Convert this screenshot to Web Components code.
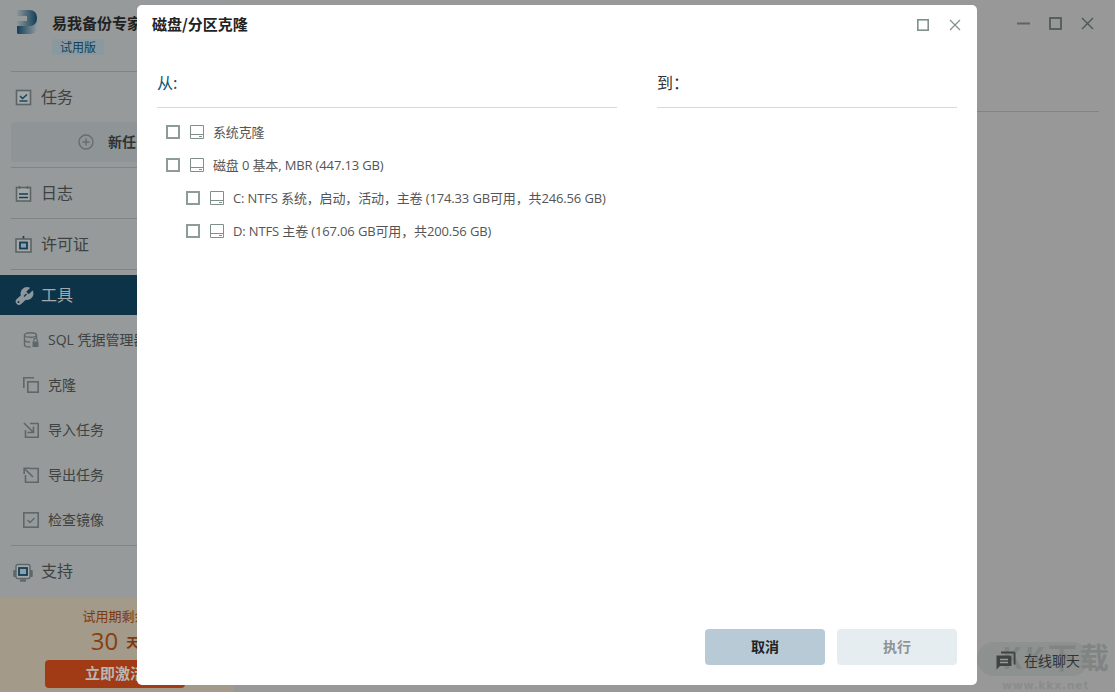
<!DOCTYPE html>
<html lang="zh">
<head>
<meta charset="utf-8">
<title>易我备份专家</title>
<style>
  html, body { margin: 0; height: 100%; }
  body { font-family: "Open Sans", "Noto Sans CJK SC", sans-serif; overflow: hidden; }
</style>
</head>
<body>

<app-window>
  <side-bar slot="side">
    <nav-item icon="task">任务</nav-item>
    <new-task>新任务</new-task>
    <side-rule></side-rule>
    <nav-item icon="log">日志</nav-item>
    <side-rule></side-rule>
    <nav-item icon="license">许可证</nav-item>
    <side-rule></side-rule>
    <nav-item icon="tools" active>工具</nav-item>
    <nav-item sub icon="sql">SQL 凭据管理器</nav-item>
    <nav-item sub icon="clone">克隆</nav-item>
    <nav-item sub icon="import">导入任务</nav-item>
    <nav-item sub icon="export">导出任务</nav-item>
    <nav-item sub icon="check">检查镜像</nav-item>
    <side-rule gap></side-rule>
    <nav-item icon="support">支持</nav-item>
  </side-bar>
  <clone-dialog slot="dialog">
    <disk-row>系统克隆</disk-row>
    <disk-row>磁盘 0 基本, MBR (447.13 GB)</disk-row>
    <disk-row child>C: NTFS 系统，启动，活动，主卷 (174.33 GB可用，共246.56 GB)</disk-row>
    <disk-row child>D: NTFS 主卷 (167.06 GB可用，共200.56 GB)</disk-row>
  </clone-dialog>
</app-window>

<script>
const ICONS = {
  task: `<rect x="1.5" y="1.5" width="14" height="14" stroke="#5c6464" stroke-width="1.6" fill="#a3a7a7"/><path d="M5 7l2.5 2.5L12 5.5" stroke="#123f58" stroke-width="1.4" fill="none"/><path d="M4.5 12h8" stroke="#123f58" stroke-width="1.4"/>`,
  log: `<rect x="1.5" y="2.5" width="14" height="13.5" stroke="#5c6464" stroke-width="1.6" fill="#a3a7a7"/><path d="M4.5 1v3M12.5 1v3" stroke="#5c6464" stroke-width="1.4"/><path d="M4 9h9M4 12.5h9" stroke="#123f58" stroke-width="1.4"/>`,
  license: `<path d="M8.500 0v3" stroke="#123f58" stroke-width="1.6"/><rect x="1" y="3" width="15" height="13" stroke="#5c6464" stroke-width="1.6" fill="#a3a7a7"/><rect x="5" y="6.500" width="7" height="6" stroke="#123f58" stroke-width="1.8" fill="#8d9fa8"/>`,
  tools: `<circle cx="12" cy="6.500" r="6.500" fill="#8e979c"/><path d="M10 9L4 14.500" stroke="#8e979c" stroke-width="6.500" stroke-linecap="round"/><path d="M12.500 6L18 .5" stroke="#0d3348" stroke-width="3.600"/><path d="M9 9.500l2.500-2.500" stroke="#0d3348" stroke-width="1.300"/><circle cx="3.500" cy="15" r="1" fill="#0d3348"/>`,
  sql: `<ellipse cx="7.500" cy="3" rx="6" ry="2.200" fill="none" stroke="#5f6868" stroke-width="1.400"/><path d="M1.500 3v10c0 1.200 2.400 2 6 2M13.500 3v3M1.500 8c0 1.200 2.400 2 5.500 2" fill="none" stroke="#5f6868" stroke-width="1.400"/><rect x="9.500" y="9.500" width="6" height="5.500" fill="#5f6868"/><path d="M10.800 9.500V8a1.700 1.700 0 0 1 3.400 0v1.500" fill="none" stroke="#5f6868" stroke-width="1.200"/>`,
  clone: `<path d="M.8 11V.8H11" fill="none" stroke="#5f6868" stroke-width="1.600"/><rect x="4.800" y="4.800" width="10.400" height="10.400" fill="none" stroke="#5f6868" stroke-width="1.600"/>`,
  import: `<path d="M7 1.500h8.200v13.700H2.500V8" fill="none" stroke="#5f6868" stroke-width="1.600"/><path d="M1 1l9 9M10.500 4.500v6h-6" fill="none" stroke="#5f6868" stroke-width="1.600"/>`,
  export: `<path d="M7 1.500h8.200v13.700H2.500V8" fill="none" stroke="#5f6868" stroke-width="1.600"/><path d="M10 10L1.500 1.500M1.200 7V1.200H7" fill="none" stroke="#5f6868" stroke-width="1.600"/>`,
  check: `<rect x=".8" y=".8" width="14.400" height="14.400" fill="none" stroke="#5f6868" stroke-width="1.600"/><path d="M4.500 8l2.500 2.500 4.500-4.500" fill="none" stroke="#5f6868" stroke-width="1.400"/>`,
  support: `<g transform="translate(-2 0)"><path d="M.8 7.500h2v6h-2zM17.200 7.500h2v6h-2z" fill="#5f6868" stroke="#5f6868"/><rect x="3" y="1.500" width="14" height="14" rx="2" fill="#a3a7a7" stroke="#5f6868" stroke-width="1.400"/><rect x="6" y="5" width="8" height="7" stroke="#123f58" stroke-width="1.800" fill="#8d9fa8"/><path d="M7 17.500h6" stroke="#5f6868" stroke-width="2.400"/></g>`
};

class AppWindow extends HTMLElement {
  constructor() {
    super();
    this.attachShadow({ mode: "open" }).innerHTML = `
      <style>
        :host { display: flex; position: relative; width: 1115px; height: 692px; overflow: hidden; background: #989898; }
        .main { flex: 1; position: relative; min-width: 0; padding: 16px 16px 0; box-sizing: border-box; }
        .controls { display: flex; justify-content: flex-end; align-items: center; gap: 17px; height: 15px; padding-right: 4px; }
        .controls svg { display: block; width: 15px; height: 15px; }
        .rule { margin: 80px 0 0 0; border-top: 1px solid #828484; }
        .chat { position: absolute; right: 35px; bottom: 22px; display: flex; align-items: center; gap: 8px; color: #303434; font-size: 14px; z-index: 1; }
        .chat svg { width: 20px; height: 20px; display: block; }
        .mark { position: absolute; left: 743px; top: 642px; width: 138px; height: 50px; }
        .pill { position: absolute; left: 0; top: 0; width: 112px; height: 34px; border-radius: 17px; background: #8d9190; }
        .brush { position: absolute; left: 25px; top: -6px; font: 700 29px/40px "Noto Sans CJK SC", sans-serif; letter-spacing: 3px; color: #808583; white-space: nowrap; }
        .site { position: absolute; left: 25px; top: 38px; font: 700 11px/12px "DejaVu Sans", sans-serif; letter-spacing: .6px; color: #8a8c8c; white-space: nowrap; }
        .dialog { position: absolute; left: 137px; top: 5px; width: 840px; height: 680px; z-index: 2; }
      </style>
      <slot name="side"></slot>
      <div class="main">
        <div class="controls">
          <svg viewBox="0 0 15 15"><path d="M1 7.500h13" stroke="#5c6464" stroke-width="2"/></svg>
          <svg viewBox="0 0 15 15"><rect x="2" y="2" width="11" height="11" fill="none" stroke="#4f5656" stroke-width="1.700"/></svg>
          <svg viewBox="0 0 15 15"><path d="M2 2l11 11M13 2L2 13" stroke="#4f5656" stroke-width="1.400"/></svg>
        </div>
        <div class="rule"></div>
        <div class="mark"><div class="pill"></div><div class="brush">KK下载</div><div class="site">www.kkx.net</div></div>
        <div class="chat">
          <svg viewBox="0 0 20 20"><path d="M5 3.500V1.500h12.500a2 2 0 0 1 2 2v11h-1.800V3.500z" fill="#3e4444"/><path d="M.5 5.500h13a2 2 0 0 1 2 2V16H4l-3.500 3.500z" fill="#3e4444"/><path d="M4 9.500h8M4 12.500h8" stroke="#989898" stroke-width="1.400"/></svg>
          <span>在线聊天</span>
        </div>
      </div>
      <div class="dialog"><slot name="dialog"></slot></div>
    `;
  }
}

class SideBar extends HTMLElement {
  constructor() {
    super();
    this.attachShadow({ mode: "open" }).innerHTML = `
      <style>
        :host { display: flex; flex-direction: column; width: 234px; height: 692px; flex: none; background: #969a9a; color: #3a3e3e; }
        .brand { display: flex; height: 72px; flex: none; box-sizing: border-box; padding: 10px 0 0 17px; gap: 15px; }
        .brand svg { width: 20px; height: 24px; flex: none; }
        .name { font: 700 15px/25px "Noto Sans CJK SC", sans-serif; color: #1f2222; white-space: nowrap; }
        .tag { width: 52px; height: 16px; background: #8a999f; border-radius: 2px; margin-top: 4px; font: 12px/15px "Noto Sans CJK SC", sans-serif; color: #123f58; text-align: center; }
        .line { height: 1px; background: #7f8484; margin: -1px 0 0 11px; flex: none; }
        .rows { flex: 1; display: flex; flex-direction: column; min-height: 0; }
        .promo { height: 94px; flex: none; box-sizing: border-box; background: #a39a89; padding-top: 9px; color: #7c3a0e; font: 13px/17px "Noto Sans CJK SC", sans-serif; }
        .promo > div { width: 230px; text-align: center; }
        .days { display: flex; justify-content: center; align-items: center; gap: 8px; height: 26px; margin-top: 4px; font-weight: 700; }
        .days b { font: 400 24px/26px "Open Sans", sans-serif; color: #86400f; }
        .promo .btn { width: 140px; height: 28px; margin: 6px 0 0 45px; background: #a03b16; border-radius: 4px; color: #b7b7b4; font: 700 15px/25px "Noto Sans CJK SC", sans-serif; }
      </style>
      <div class="brand">
        <svg viewBox="0 0 20 24">
          <defs>
            <linearGradient id="a" x1="0" x2="1"><stop offset="0" stop-color="#8b969b"/><stop offset="1" stop-color="#123f58"/></linearGradient>
            <linearGradient id="b" x1="0" x2="1"><stop offset="0" stop-color="#123f58"/><stop offset="1" stop-color="#8f9a9f"/></linearGradient>
          </defs>
          <path d="M0 11h20v7a6 6 0 0 1-6 6H1.500A1.500 1.500 0 0 1 0 22.500z" fill="url(#b)"/>
          <path d="M0 0h13a7 7 0 0 1 7 7v2a7 7 0 0 1-7 7H0V11h10V6H0z" fill="url(#a)"/>
        </svg>
        <div>
          <div class="name">易我备份专家</div>
          <div class="tag">试用版</div>
        </div>
      </div>
      <div class="line"></div>
      <div class="rows"><slot></slot></div>
      <div class="promo">
        <div>试用期剩余</div>
        <div class="days"><b>30</b><span>天</span></div>
        <div class="btn">立即激活</div>
      </div>
    `;
  }
}

class NavItem extends HTMLElement {
  constructor() {
    super();
    const icon = ICONS[this.getAttribute("icon")] || "";
    this.attachShadow({ mode: "open" }).innerHTML = `
      <style>
        :host { display: flex; align-items: center; height: 50px; flex: none; box-sizing: border-box; padding-left: 15px; gap: 9px; font: 16px "Noto Sans CJK SC", sans-serif; color: #3e4242; white-space: nowrap; overflow: hidden; }
        :host([active]) { background: #0d3348; color: #a6a9aa; height: 40px; margin: 5px 0 3px; }
        :host([sub]) { height: 45px; padding-left: 23px; gap: 8px; font-size: 14px; font-family: "Open Sans", "Noto Sans CJK SC", sans-serif; }
        svg { width: 17px; height: 17px; flex: none; overflow: visible; }
        span { padding-bottom: 3px; }
      </style>
      <svg viewBox="0 0 17 17">${icon}</svg>
      <span><slot></slot></span>
    `;
  }
}

class NewTask extends HTMLElement {
  constructor() {
    super();
    this.attachShadow({ mode: "open" }).innerHTML = `
      <style>
        :host { display: flex; align-items: center; height: 40px; flex: none; margin: 0 0 5px 11px; padding-left: 67px; gap: 14px; border-radius: 3px; background: #8f9597; font: 700 14px "Noto Sans CJK SC", sans-serif; color: #303434; white-space: nowrap; }
        svg { width: 16px; height: 16px; flex: none; }
        span { padding-bottom: 2px; }
      </style>
      <svg viewBox="0 0 16 16"><circle cx="8" cy="8" r="7" fill="none" stroke="#676e6e" stroke-width="1.400"/><path d="M8 4.500v7M4.500 8h7" stroke="#676e6e" stroke-width="1.400"/></svg>
      <span><slot></slot></span>
    `;
  }
}

class SideRule extends HTMLElement {
  constructor() {
    super();
    this.attachShadow({ mode: "open" }).innerHTML = `
      <style>
        :host { display: block; height: 1px; background: #7f8484; margin-left: 11px; flex: none; }
        :host([gap]) { margin-top: 2px; }
      </style>
    `;
  }
}

class CloneDialog extends HTMLElement {
  constructor() {
    super();
    this.attachShadow({ mode: "open" }).innerHTML = `
      <style>
        :host { display: flex; flex-direction: column; width: 840px; height: 680px; box-sizing: border-box; background: #fff; border-radius: 5px; color: #222; }
        header { display: flex; align-items: center; height: 40px; padding: 0 15px; flex: none; }
        h1 { flex: 1; margin: 0; padding-bottom: 3px; font: 700 15px "Noto Sans CJK SC", sans-serif; color: #222; }
        .ctl { display: flex; gap: 18px; align-items: center; }
        .ctl svg { display: block; width: 14px; height: 14px; }
        .cols { flex: 1; display: flex; gap: 40px; padding: 0 20px; margin-top: 17px; min-height: 0; }
        .col { display: flex; flex-direction: column; }
        .from { width: 460px; }
        .to { width: 300px; }
        .head { height: 46px; box-sizing: border-box; border-bottom: 1px solid #d9d9d9; font: 16px/40px "Noto Sans CJK SC", sans-serif; }
        .from .head { color: #0f5576; }
        .to .head { color: #333; }
        .list { padding: 7px 0 0 9px; }
        footer { display: flex; justify-content: flex-end; gap: 12px; padding: 0 20px 20px; flex: none; }
        button { width: 120px; height: 36px; border: 0; border-radius: 4px; font: 700 14px "Noto Sans CJK SC", sans-serif; padding: 0 0 2px; }
        .cancel { background: #b8cad5; color: #222; }
        .run { background: #e6edf1; color: #8f9395; }
      </style>
      <header>
        <h1>磁盘/分区克隆</h1>
        <div class="ctl">
          <svg viewBox="0 0 14 14"><rect x="1.800" y="1.800" width="10.400" height="10.400" fill="none" stroke="#7f908c" stroke-width="1.600"/></svg>
          <svg viewBox="0 0 14 14"><path d="M2 2l10 10M12 2L2 12" stroke="#7f908c" stroke-width="1.200"/></svg>
        </div>
      </header>
      <div class="cols">
        <div class="col from">
          <div class="head">从:</div>
          <div class="list"><slot></slot></div>
        </div>
        <div class="col to">
          <div class="head">到：</div>
        </div>
      </div>
      <footer>
        <button class="cancel">取消</button>
        <button class="run">执行</button>
      </footer>
    `;
  }
}

class DiskRow extends HTMLElement {
  constructor() {
    super();
    this.attachShadow({ mode: "open" }).innerHTML = `
      <style>
        :host { display: flex; align-items: center; height: 33px; font: 13px "Open Sans", "Noto Sans CJK SC", sans-serif; letter-spacing: -.14px; color: #555; white-space: nowrap; }
        :host([child]) { padding-left: 20px; }
        .box { width: 14px; height: 14px; box-sizing: border-box; border: 2px solid #8d9c98; flex: none; margin-right: 10px; }
        svg { width: 14px; height: 14px; flex: none; margin-right: 9px; }
      </style>
      <span class="box"></span>
      <svg viewBox="0 0 14 14"><path d="M.5.500h13v13H.5zM.5 9.500h13" fill="none" stroke="#7f908c"/><path d="M9 11.500h3" stroke="#7f908c"/></svg>
      <span><slot></slot></span>
    `;
  }
}

customElements.define("app-window", AppWindow);
customElements.define("side-bar", SideBar);
customElements.define("nav-item", NavItem);
customElements.define("new-task", NewTask);
customElements.define("side-rule", SideRule);
customElements.define("clone-dialog", CloneDialog);
customElements.define("disk-row", DiskRow);
</script>
</body>
</html>
